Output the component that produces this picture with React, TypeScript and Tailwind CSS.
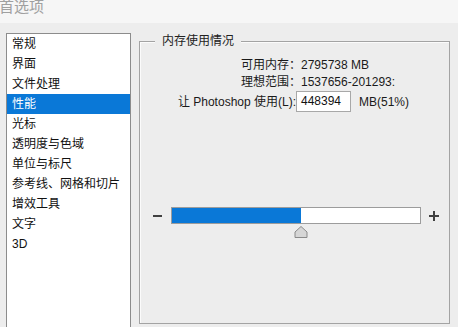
const menuItems = [
  "常规",
  "界面",
  "文件处理",
  "性能",
  "光标",
  "透明度与色域",
  "单位与标尺",
  "参考线、网格和切片",
  "增效工具",
  "文字",
  "3D",
];

const font = { fontFamily: '"Liberation Sans", "Noto Sans CJK SC", sans-serif' };

export default function App() {
  const selected = "性能";
  const percent = 52;

  return (
    <div
      className="w-[458px] h-[327px] overflow-hidden bg-[#ededed] flex flex-col text-[12px] text-[#1a1a1a]"
      style={font}
    >
      {/* window title */}
      <div className="h-[23px] shrink-0 bg-[#f6f6f6] overflow-hidden">
        <div className="-mt-[2px] -ml-[1px] text-[15px] leading-[18px] text-[#a0a0a0]">首选项</div>
      </div>

      <div className="flex flex-1 min-h-0">
        {/* category list */}
        <div className="ml-[6px] mt-[10px] w-[125px] h-[320px] shrink-0 bg-white border border-[#8c8c8c]">
          {menuItems.map((item) => (
            <div
              key={item}
              className={`h-[20px] leading-[20px] pl-[5px] whitespace-nowrap ${
                item === selected ? "bg-[#0a78d7] text-white" : "text-[#111]"
              }`}
            >
              {item}
            </div>
          ))}
        </div>

        {/* memory usage group */}
        <div className="relative ml-[8px] mt-[18px] w-[311px] h-[283px] shrink-0 border border-[#a3a3a3] shadow-[inset_1px_1px_0_#fbfbfb]">
          <span className="absolute -top-[9px] left-[15px] px-[7px] bg-[#ededed] leading-[16px] text-[#222]">
            内存使用情况
          </span>

          <div className="pt-[15px] flex flex-col">
            <div className="flex h-[16px] items-center">
              <span className="w-[161px] text-right">可用内存：</span>
              <span>2795738 MB</span>
            </div>
            <div className="flex h-[17px] items-center">
              <span className="w-[161px] text-right">理想范围：</span>
              <span>1537656-201293:</span>
            </div>
            <div className="flex items-center mt-[1px]">
              <span className="w-[156px] text-right">让 Photoshop 使用(L):</span>
              <div className="w-[55px] h-[21px] bg-white border border-[#a8a8a8] leading-[19px] pl-[4px] text-[#111]">
                448394
              </div>
              <span className="ml-[8px]">MB(51%)</span>
            </div>

            {/* slider */}
            <div className="flex items-center mt-[95px] ml-[13px]">
              <span className="w-[9px] h-[2px] bg-[#404040]" />
              <div className="relative ml-[9px] w-[250px] h-[17px] bg-white border border-[#9c9c9c]">
                <div className="h-full bg-[#0a78d7]" style={{ width: `${percent}%` }} />
                <svg
                  className="absolute top-[18px] left-[122px]"
                  width="14"
                  height="12"
                  viewBox="0 0 14 12"
                >
                  <polygon
                    points="7,0.5 13,6 13,11.5 1,11.5 1,6"
                    fill="#d6d6d6"
                    stroke="#8a8a8a"
                    strokeWidth="1"
                  />
                </svg>
              </div>
              <span className="relative ml-[8px] w-[10px] h-[10px]">
                <span className="absolute left-0 top-[4px] w-[10px] h-[2px] bg-[#404040]" />
                <span className="absolute left-[4px] top-0 w-[2px] h-[10px] bg-[#404040]" />
              </span>
            </div>
          </div>
        </div>
      </div>
    </div>
  );
}
